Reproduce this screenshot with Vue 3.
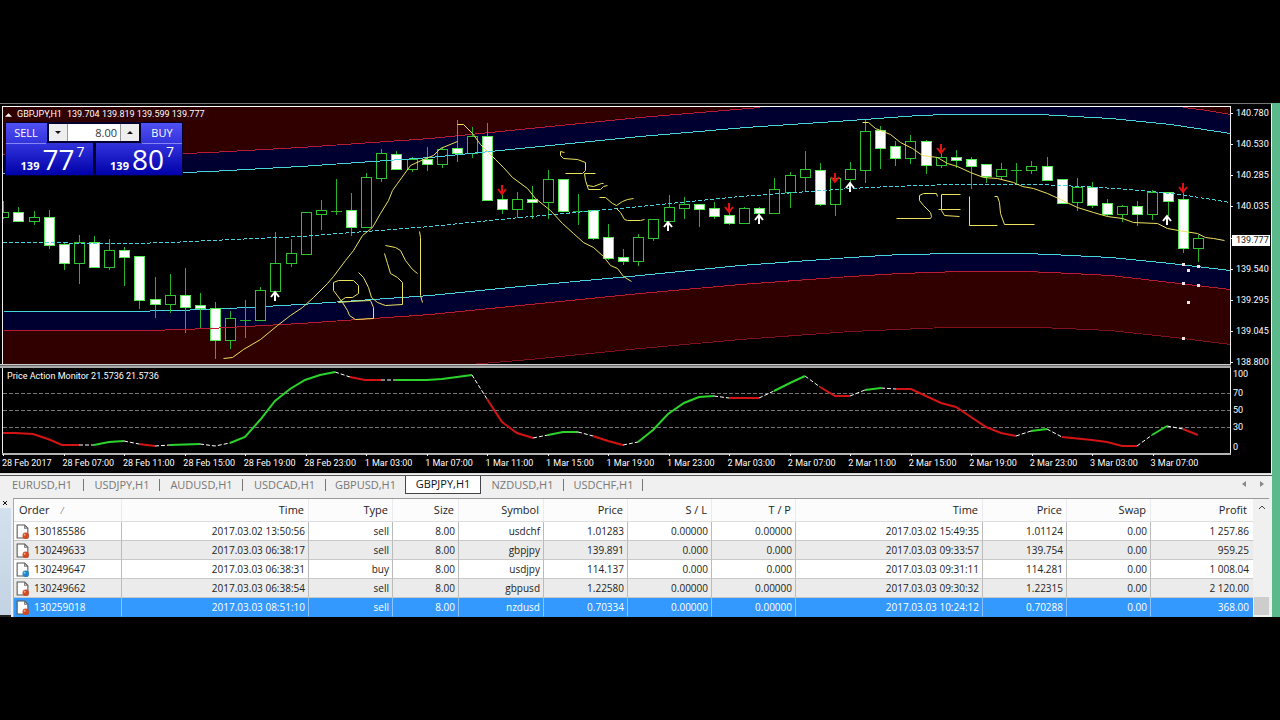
<script setup>
import { ref } from 'vue'

const STEP = 15.12
const cx = (i) => Math.round(3.3 + STEP * i)

// [wick top, body top, body bottom, wick bottom, falling]
const candles = [
  [201, 213, 217, 219, 0], [207, 213, 221, 222, 1], [211, 218, 221, 225, 0], [210, 218, 245, 249, 1],
  [243, 245, 263, 270, 1], [235, 243, 263, 284, 0], [236, 243, 267, 267, 1], [239, 251, 267, 270, 0],
  [247, 251, 257, 286, 1], [256, 257, 300, 309, 1], [277, 300, 304, 318, 1], [274, 296, 304, 313, 0],
  [268, 296, 307, 333, 1], [293, 306, 308, 328, 1], [302, 309, 340, 359, 1], [311, 319, 340, 349, 0],
  [300, 320, 320, 338, 0], [287, 291, 320, 320, 0], [232, 264, 291, 291, 0], [239, 254, 263, 267, 0],
  [213, 213, 254, 254, 0], [200, 211, 214, 230, 0], [179, 211, 212, 215, 0], [193, 211, 227, 236, 1],
  [173, 178, 227, 227, 0], [149, 154, 178, 182, 0], [151, 155, 169, 169, 1], [157, 160, 169, 172, 0],
  [147, 160, 164, 171, 1], [148, 150, 164, 168, 0], [120, 149, 153, 162, 1], [127, 137, 153, 158, 0],
  [123, 137, 200, 200, 1], [194, 200, 209, 214, 1], [192, 200, 209, 218, 0], [186, 200, 202, 219, 1],
  [170, 180, 202, 219, 0], [180, 180, 211, 211, 1], [194, 211, 211, 225, 0], [211, 211, 238, 240, 1],
  [224, 238, 258, 260, 1], [249, 258, 261, 265, 1], [234, 238, 261, 266, 0], [220, 220, 238, 241, 0],
  [195, 208, 221, 221, 0], [197, 205, 208, 219, 0], [205, 205, 209, 227, 1], [202, 209, 216, 219, 1],
  [212, 216, 223, 225, 1], [207, 209, 223, 223, 0], [207, 209, 213, 215, 1], [178, 190, 213, 213, 0],
  [172, 176, 192, 208, 0], [151, 170, 177, 191, 0], [163, 171, 204, 206, 1], [179, 179, 204, 216, 0],
  [162, 170, 179, 184, 0], [120, 132, 170, 183, 0], [126, 131, 148, 169, 1], [141, 147, 158, 166, 1],
  [135, 142, 158, 164, 0], [140, 142, 165, 174, 1], [153, 158, 165, 168, 0], [150, 158, 160, 168, 1],
  [157, 160, 166, 189, 1], [164, 165, 176, 183, 1], [163, 170, 176, 180, 0], [163, 170, 170, 183, 0],
  [161, 167, 170, 174, 0], [157, 167, 180, 180, 1], [180, 180, 203, 203, 1], [178, 188, 202, 211, 0],
  [182, 188, 205, 208, 1], [199, 204, 214, 216, 1], [205, 207, 214, 222, 0], [201, 207, 214, 226, 1],
  [190, 193, 214, 220, 0], [192, 193, 201, 216, 1], [192, 200, 248, 253, 1], [235, 239, 248, 262, 0],
]

const upperRed = '3,154 100,155 184,153 210,152 300,147 430,138 500,131 640,117 700,112 760,107'
const upperRedTail = '1183,107 1207,110 1230,114'
const upperCyan = '3,173 100,174 184,172 210,171 300,166 430,157 500,150 640,136 745,127 850,120 918,115 948,114 1040,114 1110,118 1170,124 1230,133'
const upperCyanBack = '1230,133 1170,124 1110,118 1040,114 948,114 918,115 850,120 745,127 640,136 500,150 430,157 300,166 210,171 184,172 100,174 3,173'
const middle = '3,242 130,243 170,242 210,240 300,236 430,226 520,217 640,206 740,196 850,188 890,186 950,184 1040,184 1100,187 1140,190 1180,194 1230,202'
const lowerCyan = '3,311 130,311 210,309 300,304 430,295 520,286 640,275 740,265 850,257 900,254 960,253 1025,253 1050,254 1110,257 1170,263 1230,270'
const lowerRed = '3,330 150,330 210,328 300,323 430,314 520,305 640,293 740,284 850,276 900,273 960,271 1025,271 1050,272 1110,275 1170,282 1230,289'
const lowerRedBack = '1230,289 1170,282 1110,275 1050,272 1025,271 960,271 900,273 850,276 740,284 640,293 520,305 430,314 300,323 210,328 150,330 3,330'
const bottomRed = '457,365 530,359 640,348 740,339 850,331 945,327 1040,327 1110,330 1183,338 1230,344'

const strokes = [
  '223,358 232,357 243,349 260,339 277,325 290,315 302,307 313,297 327,283 333,276 345,260 353,250 362,235 372,227 380,213 388,200 392,190 397,183 410,165 423,159 433,155 440,148 457,141',
  '457,124 463,124 472,133 480,144 488,152 495,159 503,167 512,177 527,188 535,198 550,210 562,223 573,233 583,242 593,247 603,256 610,265 617,268 623,276 631,281',
  '342,302 333,290 333,282 338,280 353,280 358,285 358,293 352,297 345,297 338,302 350,301 370,300 373,307 373,318 355,319 349,315 347,310 342,302',
  '358,272 363,277 368,287 371,297 377,302 385,305 402,304 402,282 397,277 390,273 387,263 384,253',
  '385,245 395,247 400,250 405,260 412,269 417,273',
  '419,231 420,237 420,295 422,302',
  '564,152 560,151 560,155 563,158 577,159 585,162 585,170 582,173 565,173',
  '595,173 584,173 585,180 588,189 600,189 603,186 607,185',
  '587,185 593,186 601,183 603,183',
  '599,197 605,197 612,203 616,205 622,201 627,199 633,198',
  '616,208 620,212 624,219 627,220 640,220 644,219',
  '896,218 930,218 931,216 930,212 923,205 919,200 919,195 923,193 936,193 937,196',
  '960,194 941,194 941,210 944,215 959,216',
  '938,209 960,209',
  '969,196 969,225 997,225',
  '994,196 997,196 999,202 1000,213 1004,224 1034,224',
  '862,122 868,122 875,128 890,134 900,142 912,148 922,155 937,157 947,163 957,166 970,172 983,177 997,178 1013,182 1022,186 1033,188 1047,193 1060,199 1077,207 1093,212 1107,216 1122,218 1133,222 1157,223 1167,228 1178,230 1197,233 1205,237 1213,238 1224,240',
]

const upArrows = [[275, 292], [668, 222], [759, 215], [850, 183], [1167, 216]]
const downArrows = [[502, 194], [729, 212], [835, 182], [941, 153], [1183, 192]]
const dots = [[1183, 264], [1198, 266], [1188, 270], [1183, 283], [1198, 285], [1188, 302], [1183, 338]]

const rising = [
  '94,445 109,442 124,441', '170,445 200,444',
  '230,443 245,437 260,420 275,401 290,389 305,380 320,375 335,372',
  '396,380 427,380 442,379 457,377 472,375', '548,435 563,432 578,432',
  '638,442 653,430 668,414 684,403 699,397 714,396', '774,391 790,383 805,376',
  '865,390 881,388', '1031,431 1047,429', '1152,435 1167,426',
]
const falling = [
  '3,433 15,433 33,434 48,439 62,445 79,445', '139,444 155,446', '350,377 365,380 381,380',
  '487,399 502,422 517,433 533,438', '593,436 608,441 623,445', '729,398 759,398',
  '820,387 835,396 850,396', '896,389 911,389 926,396 941,403 956,407 971,417 986,427 1001,433 1016,436',
  '1062,437 1092,440 1107,442 1122,446 1137,446', '1183,429 1198,435',
]
const neutral = [
  '79,445 94,445', '124,441 139,444', '155,446 170,445', '200,444 215,446 230,443', '335,372 350,377',
  '381,380 396,380', '472,375 487,399', '533,438 548,435', '578,432 593,436', '623,445 638,442',
  '714,396 729,398', '759,398 774,391', '805,376 820,387', '850,396 865,390', '881,388 896,389',
  '1016,436 1031,431', '1047,429 1062,437', '1137,446 1152,435', '1167,426 1183,429',
]

const prices = ['140.780', '140.530', '140.285', '140.035', '', '139.540', '139.295', '139.045', '138.800']
const levels = ['100', '70', '50', '30', '0']
const times = [
  '28 Feb 2017', '28 Feb 07:00', '28 Feb 11:00', '28 Feb 15:00', '28 Feb 19:00', '28 Feb 23:00',
  '1 Mar 03:00', '1 Mar 07:00', '1 Mar 11:00', '1 Mar 15:00', '1 Mar 19:00', '1 Mar 23:00',
  '2 Mar 03:00', '2 Mar 07:00', '2 Mar 11:00', '2 Mar 15:00', '2 Mar 19:00', '2 Mar 23:00',
  '3 Mar 03:00', '3 Mar 07:00',
]

const tabs = ['EURUSD,H1', 'USDJPY,H1', 'AUDUSD,H1', 'USDCAD,H1', 'GBPUSD,H1', 'GBPJPY,H1', 'NZDUSD,H1', 'USDCHF,H1']
const activeTab = ref('GBPJPY,H1')
const volume = ref('8.00')

const columns = ['Order', 'Time', 'Type', 'Size', 'Symbol', 'Price', 'S / L', 'T / P', 'Time', 'Price', 'Swap', 'Profit']
const orders = [
  ['130185586', '2017.03.02 13:50:56', 'sell', '8.00', 'usdchf', '1.01283', '0.00000', '0.00000', '2017.03.02 15:49:35', '1.01124', '0.00', '1 257.86'],
  ['130249633', '2017.03.03 06:38:17', 'sell', '8.00', 'gbpjpy', '139.891', '0.000', '0.000', '2017.03.03 09:33:57', '139.754', '0.00', '959.25'],
  ['130249647', '2017.03.03 06:38:31', 'buy', '8.00', 'usdjpy', '114.137', '0.000', '0.000', '2017.03.03 09:31:11', '114.281', '0.00', '1 008.04'],
  ['130249662', '2017.03.03 06:38:54', 'sell', '8.00', 'gbpusd', '1.22580', '0.00000', '0.00000', '2017.03.03 09:30:32', '1.22315', '0.00', '2 120.00'],
  ['130259018', '2017.03.03 08:51:10', 'sell', '8.00', 'nzdusd', '0.70334', '0.00000', '0.00000', '2017.03.03 10:24:12', '0.70288', '0.00', '368.00'],
]
const selected = ref('130259018')
</script>

<template>
  <main class="screen">
    <div class="window">
      <div class="content">
        <section class="charts">
          <div class="pane">
            <svg class="plot" viewBox="0 107 1231 257" aria-hidden="true">
              <polygon class="maroon" :points="`3,107 760,107 ${upperRed.split(' ').reverse().join(' ')}`" />
              <polygon class="maroon" :points="`${upperRedTail} 1230,107`" />
              <polygon class="navy" :points="`${upperRed} ${upperRedTail} ${upperCyanBack}`" />
              <polygon class="navy" :points="`${lowerCyan} ${lowerRedBack}`" />
              <polygon class="maroon" :points="`${lowerRedBack} 3,365 ${bottomRed}`" />
              <g class="bands" transform="translate(0.5 0.5)">
                <polyline class="edge red" :points="upperRed" />
                <polyline class="edge red" :points="upperRedTail" />
                <polyline class="edge cyan" :points="lowerCyan" />
                <polyline class="edge dim" :points="bottomRed" />
              </g>
              <g v-for="(c, i) in candles" :key="i" class="candle">
                <rect class="wick" :x="cx(i)" :y="c[0]" width="1" :height="c[3] - c[0]" />
                <rect v-if="c[2] - c[1] < 2" class="wick" :x="cx(i) - 5" :y="c[1]" width="11" height="1" />
                <rect
                  v-else :class="c[4] ? 'bear' : 'bull'"
                  :x="cx(i) - 4.5" :y="c[1] - 0.5" width="10" :height="c[2] - c[1] + 1"
                />
              </g>
              <g class="bands" transform="translate(0.5 0.5)">
                <polyline class="edge cyan" :points="upperCyan" />
                <polyline class="edge cyan dashed" :points="middle" />
                <polyline class="edge red" :points="lowerRed" />
                <polyline v-for="(s, i) in strokes" :key="i" class="pen" :points="s" />
              </g>
              <path
                v-for="(a, i) in upArrows" :key="'u' + i" class="arrow up"
                :d="`M${a[0]} ${a[1] + 9}v-9m-4 5l4 -5l4 5`"
              />
              <path
                v-for="(a, i) in downArrows" :key="'d' + i" class="arrow down"
                :d="`M${a[0]} ${a[1] - 9}v9m-4 -5l4 5l4 -5`"
              />
              <rect v-for="(d, i) in dots" :key="'p' + i" class="dot" :x="d[0] - 1" :y="d[1] - 1" width="3" height="3" />
              <rect class="cover" x="0" y="107" width="2" height="257" />
              <rect class="frame" x="2" y="107" width="1" height="257" />
              <rect class="frame" x="1230" y="107" width="1" height="257" />
            </svg>
            <div class="scale prices">
              <span v-for="(p, i) in prices" :key="i">{{ p }}</span>
              <strong class="current">139.777</strong>
            </div>
            <h1 class="quote">
              <svg class="caret" viewBox="0 0 8 4" aria-hidden="true"><path d="M0 4L4 0L8 4z" /></svg>
              <span>GBPJPY,H1</span><span>139.704 139.819 139.599 139.777</span>
            </h1>
            <div class="trade">
              <button class="deal" type="button">
                <span class="side">SELL</span>
                <span class="price"><b>139</b><span class="big">77</span><sup>7</sup></span>
              </button>
              <button class="deal purchase" type="button">
                <span class="side">BUY</span>
                <span class="price"><b>139</b><span class="big">80</span><sup>7</sup></span>
              </button>
              <div class="volume">
                <button type="button" aria-label="Decrease volume"><svg viewBox="0 0 6 3"><path d="M0 0H6L3 3z" /></svg></button>
                <input v-model="volume" type="text" aria-label="Volume">
                <button type="button" aria-label="Increase volume"><svg viewBox="0 0 6 3"><path d="M0 3H6L3 0z" /></svg></button>
              </div>
            </div>
          </div>
          <div class="splitter"></div>
          <div class="pane">
            <svg class="plot" viewBox="0 368 1231 88" aria-hidden="true">
              <path class="level" d="M3 393.500H1230M3 410.500H1230M3 427.500H1230" />
              <polyline v-for="(s, i) in neutral" :key="'n' + i" class="osc flat" :points="s" />
              <polyline v-for="(s, i) in rising" :key="'g' + i" class="osc rise" :points="s" />
              <polyline v-for="(s, i) in falling" :key="'f' + i" class="osc fall" :points="s" />
              <rect class="frame" x="2" y="368" width="1" height="86" />
              <rect class="frame" x="1230" y="368" width="1" height="86" />
              <rect class="axis" x="2" y="453" width="1229" height="2" />
              <rect v-for="(t, i) in times" :key="'t' + i" class="frame" :x="Math.round(3 + i * 60.5)" y="454" width="1" height="3" />
            </svg>
            <div class="scale levels"><span v-for="l in levels" :key="l">{{ l }}</span></div>
            <h2 class="indicator">Price Action Monitor 21.5736 21.5736</h2>
          </div>
          <div class="times"><span v-for="t in times" :key="t">{{ t }}</span></div>
        </section>

        <nav class="tabs" aria-label="Charts">
          <button
            v-for="t in tabs" :key="t" type="button" class="tab"
            :class="{ active: t === activeTab }" @click="activeTab = t"
          >{{ t }}</button>
          <span class="pager">
            <button type="button" aria-label="Previous"><svg viewBox="0 0 4 6"><path d="M4 0V6L0 3z" /></svg></button>
            <button type="button" aria-label="Next"><svg viewBox="0 0 4 6"><path d="M0 0V6L4 3z" /></svg></button>
          </span>
        </nav>

        <section class="terminal">
          <div class="gutter">
            <button type="button" aria-label="Close"><svg viewBox="0 0 6 6"><path d="M1 1L5 5M5 1L1 5" /></svg></button>
            <div class="grip"></div>
          </div>
          <table>
            <colgroup><col v-for="n in 12" :key="n" :class="'c' + n"></colgroup>
            <thead>
              <tr>
                <th v-for="(c, i) in columns" :key="i" scope="col">{{ c }}<i v-if="i === 0">/</i></th>
              </tr>
            </thead>
            <tbody>
              <tr v-for="o in orders" :key="o[0]" :class="{ selected: o[0] === selected }" @click="selected = o[0]">
                <td v-for="(v, i) in o" :key="i">
                  <span v-if="i === 0" class="order">
                    <svg viewBox="0 0 14 14" aria-hidden="true">
                      <path class="page" d="M2 1H9L12 4V13H2z" />
                      <path class="fold" d="M9 1V4H12" />
                      <circle :class="o[2]" cx="10" cy="11" r="3" />
                      <circle class="shine" cx="9" cy="10" r="1" />
                    </svg>{{ v }}
                  </span>
                  <template v-else>{{ v }}</template>
                </td>
              </tr>
            </tbody>
          </table>
          <div class="scrollbar">
            <svg viewBox="0 0 8 5" aria-hidden="true"><path d="M1 4L4 1L7 4" /></svg>
            <span></span>
          </div>
        </section>
      </div>
      <div class="side-edge"></div>
    </div>
  </main>
</template>

<style>
body { margin: 0; background: #000; }
</style>

<style scoped>
* { box-sizing: border-box; }
button { font: inherit; color: inherit; border: 0; padding: 0; background: none; cursor: pointer; }
.screen {
  min-height: 100vh;
  padding-top: 103px;
  background: #000;
  font-family: "Open Sans", "Noto Sans", sans-serif;
  color: #222;
}
.window { display: grid; grid-template-columns: minmax(0, 1fr) 8px; }
.side-edge { background: #5cb98b; }
.content { background: #f0f0f0; }

.charts {
  background: #000;
  color: #fff;
  border-top: 1px solid #777;
  border-right: 1px solid #eee;
  border-bottom: 1px solid #ddd;
  padding-top: 2px;
  font-family: Roboto, "Open Sans", sans-serif;
  font-size: 9px;
  font-weight: 400;
}
.pane { position: relative; display: grid; grid-template-columns: minmax(0, 1fr) 40px; }
.pane:first-child::before {
  content: "";
  grid-column: 1 / -1;
  height: 1px;
  margin: 0 40px 0 2px;
  background: #fff;
}
.plot { display: block; width: 100%; height: auto; }
.splitter { height: 4px; margin: 0 40px 0 0; border-top: 1px solid #ccc; border-bottom: 2px solid #aaa; background: #666; }
.maroon { fill: #300000; }
.navy { fill: #000030; }
.edge { fill: none; stroke-width: 1; shape-rendering: crispEdges; }
.red { stroke: #b81c34; }
.dim { stroke: #84101a; }
.cyan { stroke: #48d4dc; }
.dashed { stroke-dasharray: 4 2; }
.candle { shape-rendering: crispEdges; }
.wick { fill: #28b428; }
.bull { fill: #000; stroke: #30c430; stroke-width: 1; }
.bear { fill: #fff; stroke: #58ec58; stroke-width: 1; }
.pen { fill: none; stroke: #ece260; stroke-width: 1; }
.arrow { fill: none; stroke-width: 2; }
.up { stroke: #fff; }
.down { stroke: #e01212; }
.dot { fill: #f4e4e4; }
.frame { fill: #eee; }
.cover { fill: #000; }
.axis { fill: #b4b4b4; }
.level { stroke: #777; stroke-dasharray: 4 2; fill: none; }
.osc { fill: none; stroke-width: 2; }
.rise { stroke: #2bd32b; }
.fall { stroke: #d41414; }
.flat { stroke: #fff; stroke-width: 1; stroke-dasharray: 4 2; }

.scale { position: relative; line-height: 13px; }
.scale span { display: block; height: 13px; padding-left: 5px; position: relative; }
.prices { display: flex; flex-direction: column; justify-content: space-between; margin-bottom: -5px; }
.prices span::before {
  content: "";
  position: absolute;
  left: 0;
  top: 6px;
  width: 2px;
  height: 1px;
  background: #eee;
}
.current {
  position: absolute;
  left: 1px;
  right: 1px;
  top: 49%;
  height: 11px;
  padding-left: 4px;
  line-height: 11px;
  font-weight: 400;
  color: #111;
  background: #fff;
}
.levels { display: grid; grid-template-rows: 17px 17px 17px 17px 18px; align-content: start; align-items: center; }
.levels span { padding-left: 2px; }
.levels span:first-child { align-self: start; }
.levels span:last-child { align-self: end; }
.quote, .indicator { position: absolute; margin: 0; font-size: 9px; line-height: 13px; font-weight: 400; color: #fff; }
.quote { top: 2px; left: 5px; display: flex; align-items: center; gap: 5px; }
.quote span { white-space: pre; }
.caret { width: 7px; height: 4px; fill: #fff; }
.indicator { top: 2px; left: 7px; }

.trade {
  position: absolute;
  top: 16px;
  left: 5px;
  width: 178px;
  height: 54px;
  padding: 1px;
  display: grid;
  grid-template-columns: 1fr 1fr;
  gap: 3px;
  background: #00002c;
  font-family: "Open Sans", "Noto Sans", sans-serif;
}
.deal {
  display: flex;
  flex-direction: column;
  justify-content: space-between;
  color: #fff;
  background: linear-gradient(#5050f4, #2a2ad4 50%, #0000a8);
}
.side { align-self: flex-start; width: 40px; height: 21px; line-height: 20px; font-size: 11px; border-bottom: 1px solid #8585f5; }
.purchase .side { align-self: flex-end; }
.price { display: flex; align-items: baseline; justify-content: flex-end; height: 31px; width: 100%; padding-right: 8px; line-height: 31px; }
.price b { font-size: 11px; margin-right: 3px; }
.big { font-size: 28px; line-height: 30px; }
.price sup { align-self: flex-start; font-size: 14px; line-height: 16px; margin-left: 2px; }
.volume {
  position: absolute;
  top: 0;
  left: 42px;
  width: 94px;
  height: 21px;
  display: grid;
  grid-template-columns: 18px 1fr 18px;
  border: 2px solid #00002c;
  background: #eee;
}
.volume button { display: grid; place-items: center; background: #eee; }
.volume svg { width: 6px; height: 3px; fill: #111; }
.volume input {
  min-width: 0;
  padding: 0 3px;
  border: 0;
  border-left: 1px solid #999;
  border-right: 1px solid #999;
  text-align: right;
  font: 11px/17px "Open Sans", "Noto Sans", sans-serif;
  color: #333;
  background: #fff;
}

.times { display: grid; grid-template-columns: repeat(20, minmax(0, 1fr)); height: 17px; padding: 0 60px 0 2px; line-height: 14px; white-space: nowrap; }

.tabs {
  display: flex;
  align-items: flex-start;
  height: 23px;
  margin-top: 1px;
  border-top: 1px solid #555;
  font-size: 11px;
  line-height: 15px;
  color: #777;
}
.tab { position: relative; width: 83px; height: 18px; padding-bottom: 2px; text-align: center; }
.tab:first-child { width: 84px; }
.tab:nth-child(2) { width: 76px; }
.tab:nth-child(5) { width: 79px; }
.tab:nth-child(6) { width: 76px; }
.tab:nth-child(8) { width: 79px; }
.tab::after { content: ""; position: absolute; right: 0; top: 3px; height: 12px; width: 1px; background: #777; }
.tab.active { color: #111; background: #fff; border: 1px solid #444; border-top: 0; }
.tab.active::after, .tab:nth-child(5)::after { display: none; }
.pager { display: flex; gap: 14px; margin: 5px 8px 0 auto; }
.pager button { display: grid; }
.pager svg { width: 4px; height: 6px; fill: #888; }

.terminal { display: grid; grid-template-columns: 13px minmax(0, 1fr) 16px; padding-right: 3px; font-size: 10px; }
.gutter { display: flex; flex-direction: column; padding-right: 2px; }
.gutter button { height: 10px; padding-left: 2px; display: grid; align-items: center; }
.gutter svg { width: 6px; height: 6px; fill: none; stroke: #111; stroke-width: 1; }
.grip { flex: 1; background: linear-gradient(#d3e0ee, #c3d3e3); border-bottom: 2px solid #222; }
table { width: 100%; table-layout: fixed; border-spacing: 0; border-top: 1px solid #999; border-left: 1px solid #aaa; background: #fff; }
.c1 { width: 108px; }
.c2, .c9 { width: 187px; }
.c3, .c6, .c7, .c8, .c10, .c11 { width: 84px; }
.c4 { width: 66px; }
.c5 { width: 85px; }
th, td { height: 19px; line-height: 16px; padding: 0 3px 0 0; text-align: right; white-space: nowrap; font-weight: 400; border-right: 1px solid #bbb; border-bottom: 1px solid #c8c8c8; }
th { height: 23px; padding-right: 4px; background: #fcfcfd; border-right-color: #e8ecf2; border-bottom-color: #ddd; font-size: 11px; }
th:first-child { text-align: left; padding-left: 5px; }
th i { margin-left: 11px; font-size: 9px; color: #888; }
tr > :last-child { border-right: 0; padding-right: 4px; }
tr > th:last-child { padding-right: 6px; }
tbody tr:nth-child(even) { background: #ebebeb; }
.selected td { color: #fff; background: #3399ff; border-bottom-color: #3399ff; border-right-color: #8cc4ff; }
.order { display: flex; align-items: center; gap: 4px; padding-left: 1px; }
.order svg { width: 15px; height: 15px; }
.page { fill: #fff; stroke: #555; stroke-width: 1; }
.fold { fill: none; stroke: #777; stroke-width: 1; }
.sell { fill: #d24a1e; }
.buy { fill: #1e86cc; }
.shine { fill: #ffffff88; }
.scrollbar { display: flex; flex-direction: column; align-items: center; justify-content: space-between; padding: 6px 0 2px 1px; border-top: 1px solid #999; }
.scrollbar svg { width: 8px; height: 5px; fill: none; stroke: #444; stroke-width: 1; }
.scrollbar span { align-self: stretch; height: 18px; background: #cdcdcd; }
</style>
